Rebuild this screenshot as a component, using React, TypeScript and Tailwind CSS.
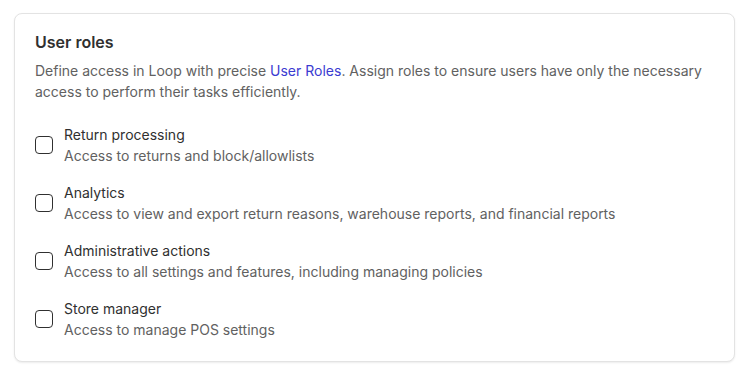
const roles = [
  { title: "Return processing", description: "Access to returns and block/allowlists" },
  {
    title: "Analytics",
    description: "Access to view and export return reasons, warehouse reports, and financial reports",
  },
  {
    title: "Administrative actions",
    description: "Access to all settings and features, including managing policies",
  },
  { title: "Store manager", description: "Access to manage POS settings" },
];

export default function App() {
  return (
    <div className="min-h-[377px] bg-white pt-[13px] pr-[19px] pl-[14px] font-['Inter',sans-serif]">
      <div className="rounded-lg border border-[#e3e3e3] bg-white px-5 pt-4 pb-[21px] shadow-[0_1px_2px_rgba(0,0,0,0.08)]">
        <h2 className="text-base leading-6 font-semibold text-[#303030]">User roles</h2>
        <p className="mt-[6px] text-sm leading-[21px] text-[#616161]">
          Define access in Loop with precise{" "}
          <a href="#" className="text-[#3b3bd1]">
            User Roles
          </a>
          . Assign roles to ensure users have only the necessary access to perform their tasks efficiently.
        </p>

        <div className="mt-[22px] flex flex-col gap-4">
          {roles.map((role) => (
            <label key={role.title} className="flex items-center gap-[11px]">
              <input
                type="checkbox"
                className="size-[18px] shrink-0 appearance-none rounded-[4px] border-[1.5px] border-[#303030] bg-white"
              />
              <span className="flex flex-col text-sm leading-[21px]">
                <span className="text-[#303030]">{role.title}</span>
                <span className="text-[#616161]">{role.description}</span>
              </span>
            </label>
          ))}
        </div>
      </div>
    </div>
  );
}
